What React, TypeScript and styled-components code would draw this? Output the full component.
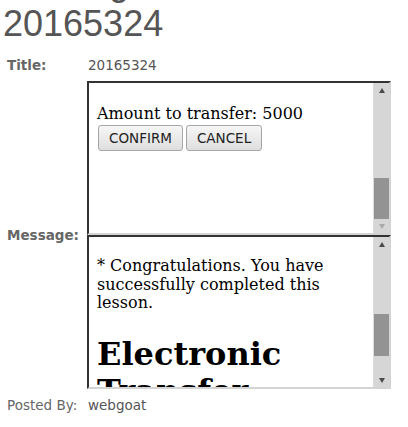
import styled, { createGlobalStyle } from "styled-components";

const GlobalStyle = createGlobalStyle`
  html, body {
    margin: 0;
    padding: 0;
    background: #ffffff;
    overflow: hidden;
  }
`;

const Page = styled.div`
  padding: 0 3px;
  font-family: "DejaVu Sans", Verdana, sans-serif;
  color: #555555;
`;

const Heading = styled.h1`
  margin: -38px 0 0;
  font-family: "Liberation Sans", Arial, sans-serif;
  font-size: 36px;
  font-weight: 400;
  line-height: 41px;
  color: #555555;
  width: 390px;
`;

const Details = styled.div`
  display: grid;
  grid-template-columns: 84px 1fr;
  grid-template-rows: 16px auto 16px;
  row-gap: 8px;
  margin-top: 13px;
  align-items: center;
`;

const Label = styled.div<{ $bold?: boolean }>`
  padding-left: 4px;
  font-size: 13.5px;
  font-weight: ${({ $bold }) => ($bold ? 700 : 400)};
  color: #666666;
  line-height: 16px;
  white-space: nowrap;
`;

const Value = styled.div`
  padding-left: 1px;
  font-size: 13.5px;
  line-height: 16px;
  color: #555555;
`;

const Frames = styled.div`
  display: flex;
  flex-direction: column;
`;

const Frame = styled.div`
  width: 300px;
  height: 150px;
  display: flex;
  border-style: solid;
  border-width: 2px;
  border-color: #333333 #d4d4d4 #d4d4d4 #333333;
  background: #ffffff;
`;

const FrameBody = styled.div<{ $top: number }>`
  flex: 1;
  overflow: hidden;
  padding: ${({ $top }) => $top}px 0 0 8px;
  font-family: "DejaVu Serif", "Liberation Serif", serif;
  font-size: 16px;
  color: #000000;
`;

const Line = styled.div`
  line-height: 18.6px;
`;

const ButtonRow = styled.div`
  display: flex;
  gap: 3px;
  margin: 1px 0 0 1px;
`;

const Button = styled.button`
  height: 26px;
  padding: 0 10px;
  font-family: "DejaVu Sans", sans-serif;
  font-size: 13.5px;
  color: #222222;
  border: 1px solid #a6a6a6;
  border-radius: 3px;
  background: linear-gradient(#f6f6f6, #dedede);
`;

const Congrats = styled.p`
  margin: 0;
  width: 270px;
  line-height: 18.6px;
`;

const Title = styled.h1`
  margin: 23px 0 0;
  font-size: 32px;
  font-weight: 700;
  line-height: 37px;
`;

const Scrollbar = styled.div`
  width: 15px;
  display: flex;
  flex-direction: column;
  background: #d6d6d6;
  border-left: 1px solid #dcdcdc;
`;

const ArrowBtn = styled.div`
  height: 14px;
  display: flex;
  align-items: center;
  justify-content: center;
`;

const Arrow = styled.span<{ $down?: boolean; $off?: boolean }>`
  width: 0;
  height: 0;
  border-left: 3px solid transparent;
  border-right: 3px solid transparent;
  ${({ $down, $off }) =>
    $down
      ? `border-top: 5px solid ${$off ? "#a9a9a9" : "#4a4a4a"};`
      : `border-bottom: 5px solid ${$off ? "#a9a9a9" : "#4a4a4a"};`}
`;

const Track = styled.div`
  flex: 1;
  display: flex;
  flex-direction: column;
`;

const Thumb = styled.div<{ $top: number; $h: number }>`
  margin-top: ${({ $top }) => $top}px;
  height: ${({ $h }) => $h}px;
  background: #939393;
`;

type BarProps = { thumbTop: number; thumbHeight: number; atEnd?: boolean };

const FakeScrollbar = ({ thumbTop, thumbHeight, atEnd }: BarProps) => (
  <Scrollbar>
    <ArrowBtn>
      <Arrow />
    </ArrowBtn>
    <Track>
      <Thumb $top={thumbTop} $h={thumbHeight} />
    </Track>
    <ArrowBtn>
      <Arrow $down $off={atEnd} />
    </ArrowBtn>
  </Scrollbar>
);

const App = () => {
  return (
    <Page>
      <GlobalStyle />
      <Heading>Message Contents For: 20165324</Heading>
      <Details>
        <Label $bold>Title:</Label>
        <Value>20165324</Value>

        <Label $bold>Message:</Label>
        <Frames>
          <Frame>
            <FrameBody $top={22}>
              <Line>Amount to transfer: 5000</Line>
              <ButtonRow>
                <Button>CONFIRM</Button>
                <Button>CANCEL</Button>
              </ButtonRow>
            </FrameBody>
            <FakeScrollbar thumbTop={81} thumbHeight={41} atEnd />
          </Frame>
          <Frame>
            <FrameBody $top={20}>
              <Congrats>
                * Congratulations. You have successfully completed this lesson.
              </Congrats>
              <Title>Electronic Transfer</Title>
            </FrameBody>
            <FakeScrollbar thumbTop={63} thumbHeight={42} />
          </Frame>
        </Frames>

        <Label>Posted By:</Label>
        <Value>webgoat</Value>
      </Details>
    </Page>
  );
};

export default App;
